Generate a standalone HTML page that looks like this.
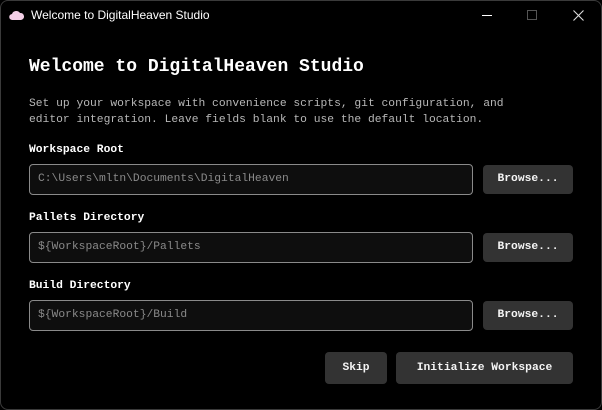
<!DOCTYPE html>
<html><head><style>
*{margin:0;padding:0;box-sizing:border-box}
body{width:602px;height:410px;background:#000;overflow:hidden;position:relative;font-family:"Liberation Mono",monospace;color:#fff}
.frame{position:absolute;left:0;top:0;width:602px;height:410px;border:1px solid #3a3a3a;border-radius:8px;pointer-events:none}
.tt{position:absolute;left:31px;top:8px;font:12px "Liberation Sans",sans-serif;color:#fff}
.a{position:absolute;white-space:pre}
h1{position:absolute;left:29px;top:57px;font-size:18px;font-weight:bold;white-space:pre}
.p{left:29px;font-size:11.3px;color:#b8b8b8;line-height:16px}
.l{left:29px;font-size:11.3px;font-weight:bold}
.in{position:absolute;left:29px;width:444px;height:31px;border:1px solid #8a8a8a;border-radius:4px;background:#0e0e0e;font-size:11.3px;color:#8a8a8a;padding:8px 0 0 8px;white-space:pre}
.b{position:absolute;background:#333;border-radius:4px;font-size:11.3px;font-weight:bold;text-align:center;color:#f4f4f4}
</style></head><body>
<svg style="position:absolute;left:9px;top:9px" width="15" height="12" viewBox="0 0 15 12"><path d="M3.5 11 A3 3 0 0 1 3 5 A4.5 4.5 0 0 1 11 4 A3.5 3.5 0 0 1 12 11 Z" fill="#f3cfe6"/></svg>
<div class="tt">Welcome to DigitalHeaven Studio</div>
<div class="a" style="left:482px;top:15px;width:10px;height:1px;background:#fff"></div>
<div class="a" style="left:527px;top:10px;width:10px;height:10px;border:1px solid #555"></div>
<svg class="a" style="left:573px;top:10px" width="11" height="11"><path d="M0.5 0.5L10.5 10.5M10.5 0.5L0.5 10.5" stroke="#ddd" stroke-width="1.1"/></svg>
<h1>Welcome to DigitalHeaven Studio</h1>
<div class="a p" style="top:96px">Set up your workspace with convenience scripts, git configuration, and
editor integration. Leave fields blank to use the default location.</div>
<div class="a l" style="top:144px">Workspace Root</div>
<div class="in" style="top:164px">C:\Users\mltn\Documents\DigitalHeaven</div>
<div class="b" style="left:483px;top:165px;width:90px;height:29px;line-height:29px">Browse...</div>
<div class="a l" style="top:212px">Pallets Directory</div>
<div class="in" style="top:232px">${WorkspaceRoot}/Pallets</div>
<div class="b" style="left:483px;top:233px;width:90px;height:29px;line-height:29px">Browse...</div>
<div class="a l" style="top:280px">Build Directory</div>
<div class="in" style="top:300px">${WorkspaceRoot}/Build</div>
<div class="b" style="left:483px;top:301px;width:90px;height:29px;line-height:29px">Browse...</div>
<div class="b" style="left:325px;top:352px;width:62px;height:32px;line-height:32px">Skip</div>
<div class="b" style="left:396px;top:352px;width:177px;height:32px;line-height:32px">Initialize Workspace</div>
<div class="frame"></div>
</body></html>
